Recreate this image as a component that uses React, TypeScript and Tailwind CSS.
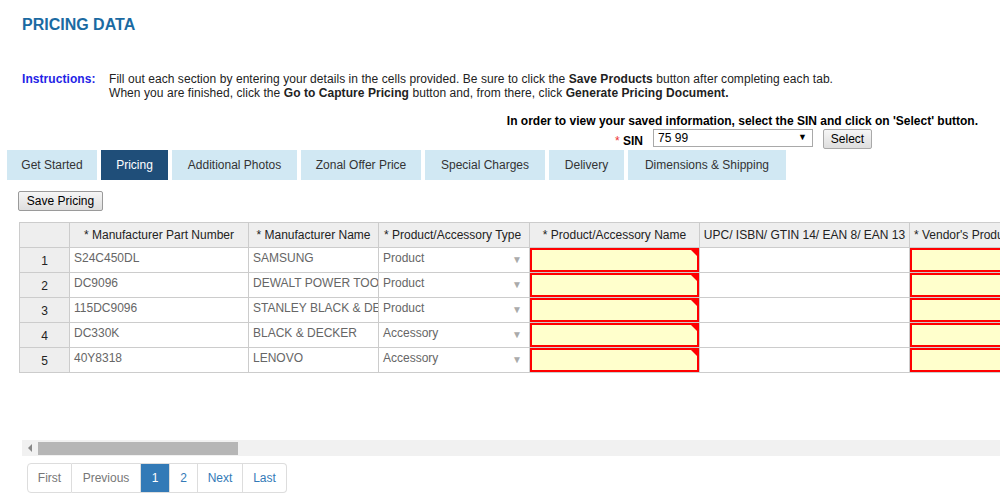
import React from 'react';

const tabs = [
  { label: 'Get Started', w: 'w-[90px]' },
  { label: 'Pricing', w: 'w-[67px]', active: true },
  { label: 'Additional Photos', w: 'w-[125px]' },
  { label: 'Zonal Offer Price', w: 'w-[120px]' },
  { label: 'Special Charges', w: 'w-[120px]' },
  { label: 'Delivery', w: 'w-[75px]' },
  { label: 'Dimensions & Shipping', w: 'w-[158px]' },
];

const rows = [
  { part: 'S24C450DL', name: 'SAMSUNG', type: 'Product' },
  { part: 'DC9096', name: 'DEWALT POWER TOOLS', type: 'Product' },
  { part: '115DC9096', name: 'STANLEY BLACK & DECKER', type: 'Product' },
  { part: 'DC330K', name: 'BLACK & DECKER', type: 'Accessory' },
  { part: '40Y8318', name: 'LENOVO', type: 'Accessory' },
];

const pages = [
  { label: 'First', cls: 'w-[45px] text-[#777] rounded-l border-l' },
  { label: 'Previous', cls: 'w-[69px] text-[#777]' },
  { label: '1', cls: 'w-[29px] bg-[#337ab7] border-[#337ab7] text-white' },
  { label: '2', cls: 'w-[28px] text-[#337ab7]' },
  { label: 'Next', cls: 'w-[45px] text-[#337ab7]' },
  { label: 'Last', cls: 'w-[44px] text-[#337ab7] rounded-r' },
];

function RequiredCell() {
  return (
    <td className="p-0 border border-[#ccc]">
      <div className="relative h-[24px] border-2 border-[#ff0000] bg-[#ffffcc]">
        <div className="absolute right-0 top-0 w-0 h-0 border-l-[6px] border-l-transparent border-t-[6px] border-t-[#ff0000]" />
      </div>
    </td>
  );
}

function TextCell({ children }: { children: React.ReactNode }) {
  return (
    <td className="border border-[#ccc] p-0">
      <div className="h-[24px] overflow-hidden whitespace-nowrap pl-[4px] pt-[3px] leading-[14px]">{children}</div>
    </td>
  );
}

export default function App() {
  return (
    <div className="w-[1000px] h-[500px] overflow-hidden bg-white font-['Liberation_Sans',Arial,sans-serif] text-[12px] text-[#222]">
      <h1 className="pl-[22px] pt-[14px] text-[16px] font-bold text-[#1a6aa2] leading-[22px]">PRICING DATA</h1>

      <div className="mt-[36px] flex pl-[22px] leading-[14px] tracking-[0.06px]">
        <div className="w-[87px] font-bold text-[#2323e6]">Instructions:</div>
        <div className="text-[#222]">
          <div>
            Fill out each section by entering your details in the cells provided. Be sure to click the <b>Save Products</b> button after completing each tab.
          </div>
          <div>
            When you are finished, click the <b>Go to Capture Pricing</b> button and, from there, click <b>Generate Pricing Document.</b>
          </div>
        </div>
      </div>

      <div className="mt-[14px] pr-[22px] text-right font-bold leading-[14px] text-black">
        In order to view your saved information, select the SIN and click on 'Select' button.
      </div>

      <div className="mt-px flex items-start pl-[615px]">
        <span className="mt-[3px] font-bold text-black"><span className="text-[#e33] font-normal">* </span>SIN</span>
        <div className="ml-[10px] flex h-[18px] w-[160px] items-center justify-between border border-[#a9a9a9] bg-white pl-[4px] pr-[5px] text-black">
          <span>75 99</span>
          <span className="text-[9px]">▼</span>
        </div>
        <button className="ml-[10px] h-[20px] w-[49px] rounded-[2px] border border-[#a9a9a9] bg-gradient-to-b from-[#f6f6f6] to-[#dedede] text-black">Select</button>
      </div>

      <div className="flex gap-[4px] pl-[7px]">
        {tabs.map(t => (
          <div
            key={t.label}
            className={`${t.w} flex h-[30px] items-center justify-center text-[12px] ${t.active ? 'bg-[#1f4e79] text-white' : 'bg-[#d1e8f3] text-[#333]'}`}
          >
            {t.label}
          </div>
        ))}
      </div>

      <button className="ml-[18px] mt-[11px] h-[20px] w-[85px] rounded-[2px] border border-[#9a9a9a] bg-gradient-to-b from-[#f6f6f6] to-[#dedede] text-[12px] text-black">
        Save Pricing
      </button>

      <div className="ml-[19px] mt-[11px] overflow-hidden">
        <table className="table-fixed border-collapse text-[12px] w-[1100px]">
          <colgroup>
            <col className="w-[50px]" />
            <col className="w-[179px]" />
            <col className="w-[130px]" />
            <col className="w-[151px]" />
            <col className="w-[170px]" />
            <col className="w-[210px]" />
            <col className="w-[210px]" />
          </colgroup>
          <thead>
            <tr className="h-[25px] bg-[#eee] text-[#222]">
              <th className="border border-[#ccc] font-normal"></th>
              <th className="border border-[#ccc] font-normal whitespace-nowrap overflow-hidden">* Manufacturer Part Number</th>
              <th className="border border-[#ccc] font-normal whitespace-nowrap overflow-hidden">* Manufacturer Name</th>
              <th className="border border-[#ccc] font-normal whitespace-nowrap overflow-hidden text-left pl-[5px]">* Product/Accessory Type</th>
              <th className="border border-[#ccc] font-normal whitespace-nowrap overflow-hidden">* Product/Accessory Name</th>
              <th className="border border-[#ccc] font-normal whitespace-nowrap overflow-hidden">UPC/ ISBN/ GTIN 14/ EAN 8/ EAN 13</th>
              <th className="border border-[#ccc] font-normal whitespace-nowrap overflow-hidden text-left pl-[4px]">* Vendor's Product Description</th>
            </tr>
          </thead>
          <tbody>
            {rows.map((r, i) => (
              <tr key={r.part} className="text-[#666]">
                <td className="border border-[#ccc] bg-[#eee] p-0 text-center text-[#222]">
                  <div className="h-[24px] pt-[6px] leading-[14px]">{i + 1}</div>
                </td>
                <TextCell>{r.part}</TextCell>
                <TextCell>{r.name}</TextCell>
                <td className="border border-[#ccc] p-0">
                  <div className="flex h-[24px] justify-between pl-[4px] pr-[7px] pt-[3px] leading-[14px]">
                    <span>{r.type}</span>
                    <span className="pt-[2px] text-[10px] text-[#aaa]">▼</span>
                  </div>
                </td>
                <RequiredCell />
                <td className="border border-[#ccc]"></td>
                <RequiredCell />
              </tr>
            ))}
          </tbody>
        </table>
      </div>

      <div className="ml-[22px] mt-[67px] flex h-[16px] items-center bg-[#f1f1f1]">
        <div className="flex w-[16px] justify-center">
          <div className="h-0 w-0 border-y-[4px] border-y-transparent border-r-[4px] border-r-[#888]" />
        </div>
        <div className="h-[13px] w-[200px] bg-[#b6b6b6]" />
      </div>

      <div className="ml-[27px] mt-[7px] flex">
        {pages.map(p => (
          <div
            key={p.label}
            className={`${p.cls} flex h-[30px] items-center justify-center border-y border-r border-[#ddd] text-[12px]`}
          >
            {p.label}
          </div>
        ))}
      </div>
    </div>
  );
}
